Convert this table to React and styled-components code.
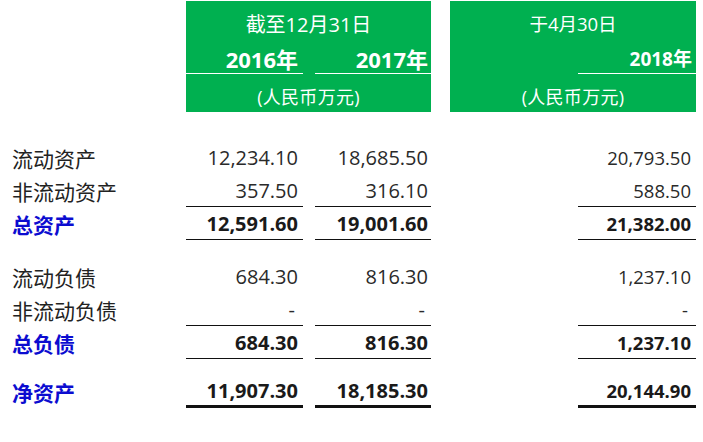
import React from "react";
import styled, { createGlobalStyle } from "styled-components";

const GREEN = "#00b050";
const BLUE = "#0c0cd0";
const INK = "#222222";

const GlobalStyle = createGlobalStyle`
  html, body {
    margin: 0;
    padding: 0;
    background: #ffffff;
  }
  body {
    font-family: "Open Sans", "Noto Sans CJK SC", sans-serif;
    color: ${INK};
  }
`;

const Page = styled.div`
  width: 703px;
  height: 442px;
  padding-top: 1px;
  box-sizing: border-box;
  overflow: hidden;
`;

const Header = styled.div`
  display: flex;
  padding-left: 186px;
  gap: 19px;
`;

const Panel = styled.div`
  width: ${({ $width }) => $width}px;
  height: 111px;
  background: ${GREEN};
  color: #ffffff;
  display: flex;
  flex-direction: column;
`;

const PanelTitle = styled.div`
  height: 44px;
  display: flex;
  align-items: center;
  justify-content: center;
  font-size: ${({ $size }) => $size}px;
`;

const YearRow = styled.div`
  display: grid;
  grid-template-columns: ${({ $cols }) => $cols};
  height: 29px;
`;

const Year = styled.div`
  grid-column: ${({ $col }) => $col};
  border-bottom: 1px solid #ffffff;
  text-align: right;
  font-weight: 700;
  font-size: ${({ $size }) => $size}px;
  line-height: 28px;
  padding-right: ${({ $pad }) => $pad}px;
`;

const Unit = styled.div`
  padding-top: 11px;
  line-height: 24px;
  text-align: center;
  font-size: 18px;
  letter-spacing: 0.3px;
`;

const Body = styled.div`
  margin-top: 29px;
`;

const Row = styled.div`
  display: grid;
  grid-template-columns: 186px 117px 12px 116px 147px 118px;
  height: 33px;
`;

const Spacer = styled.div`
  height: ${({ $h }) => $h}px;
`;

const Label = styled.div`
  grid-column: 1;
  padding-left: 12px;
  display: flex;
  align-items: center;
  font-size: 21px;
  white-space: nowrap;
  color: ${({ $total }) => ($total ? BLUE : INK)};
  font-weight: ${({ $total }) => ($total ? 700 : 400)};
`;

const Value = styled.div`
  grid-column: ${({ $col }) => $col};
  display: flex;
  align-items: center;
  justify-content: flex-end;
  box-sizing: border-box;
  padding-right: ${({ $pad }) => $pad}px;
  font-size: ${({ $size }) => $size}px;
  font-weight: ${({ $bold }) => ($bold ? 700 : 400)};
  color: ${({ $bold }) => ($bold ? "#1a1a1a" : "#2a2a2a")};
  border-bottom: ${({ $line }) =>
    $line ? `${$line}px solid #111111` : "none"};
`;

const Dash = styled.span`
  margin-right: 3px;
`;

const COLUMNS = [
  { col: 2, pad: 5, size: 20 },
  { col: 4, pad: 3, size: 20 },
  { col: 6, pad: 5, size: 18.5 },
];

const ROWS = [
  { label: "流动资产", values: ["12,234.10", "18,685.50", "20,793.50"] },
  { label: "非流动资产", values: ["357.50", "316.10", "588.50"], line: 1 },
  {
    label: "总资产",
    values: ["12,591.60", "19,001.60", "21,382.00"],
    total: true,
    line: 1,
  },
  { spacer: 20 },
  { label: "流动负债", values: ["684.30", "816.30", "1,237.10"] },
  { label: "非流动负债", values: ["-", "-", "-"], line: 1 },
  {
    label: "总负债",
    values: ["684.30", "816.30", "1,237.10"],
    total: true,
    line: 1,
  },
  { spacer: 16 },
  {
    label: "净资产",
    values: ["11,907.30", "18,185.30", "20,144.90"],
    total: true,
    line: 3,
  },
];

const App = () => (
  <>
    <GlobalStyle />
    <Page>
      <Header>
        <Panel $width={245}>
          <PanelTitle $size={20}>截至12月31日</PanelTitle>
          <YearRow $cols="117px 12px 116px">
            <Year $col={1} $pad={5} $size={22}>
              2016年
            </Year>
            <Year $col={3} $pad={3} $size={22}>
              2017年
            </Year>
          </YearRow>
          <Unit>(人民币万元)</Unit>
        </Panel>
        <Panel $width={246}>
          <PanelTitle $size={18.5}>于4月30日</PanelTitle>
          <YearRow $cols="128px 118px">
            <Year $col={2} $pad={4} $size={19}>
              2018年
            </Year>
          </YearRow>
          <Unit>(人民币万元)</Unit>
        </Panel>
      </Header>

      <Body>
        {ROWS.map((row, i) =>
          row.spacer ? (
            <Spacer key={i} $h={row.spacer} />
          ) : (
            <Row key={i}>
              <Label $total={row.total}>{row.label}</Label>
              {row.values.map((v, j) => (
                <Value
                  key={j}
                  $col={COLUMNS[j].col}
                  $pad={COLUMNS[j].pad}
                  $size={COLUMNS[j].size}
                  $bold={row.total}
                  $line={row.line}
                >
                  {v === "-" ? <Dash>-</Dash> : v}
                </Value>
              ))}
            </Row>
          )
        )}
      </Body>
    </Page>
  </>
);

export default App;
